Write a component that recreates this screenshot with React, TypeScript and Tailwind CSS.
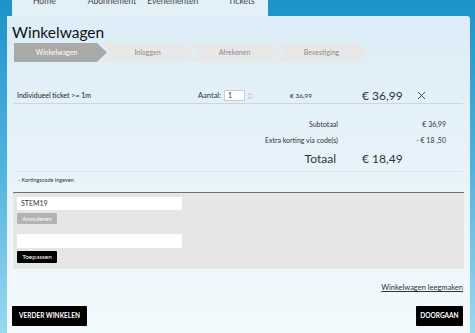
import React from 'react'
import { X, ChevronsUpDown } from 'lucide-react'

const chevron =
  '[clip-path:polygon(0_0,calc(100%-10px)_0,100%_50%,calc(100%-10px)_100%,0_100%,10px_50%)]'

export default function App() {
  return (
    <div className="w-[475px] h-[333px] overflow-hidden bg-gradient-to-b from-[#1a92c9] via-[#4fb3de] to-[#9ad8f0] font-['Lato',sans-serif] text-[#333]">
      {/* Top nav tab, cut off at the top */}
      <div className="ml-[12px] w-[256px] h-[16px] overflow-hidden bg-[#e2f0f7] flex text-[8.5px] text-[#444]">
        <span className="-mt-[5px] ml-[21px]">Home</span>
        <span className="-mt-[5px] ml-[32px]">Abonnement</span>
        <span className="-mt-[5px] ml-[11px]">Evenementen</span>
        <span className="-mt-[5px] ml-[30px]">Tickets</span>
      </div>

      {/* Main panel */}
      <div className="ml-[7px] w-[463px] h-[317px] rounded-tr-[3px] bg-gradient-to-b from-[#dcedf7] to-[#f3fafd] px-[5px] pt-[6px]">
        <h1 className="text-[15.5px] leading-[20px] text-[#111]">Winkelwagen</h1>

        {/* Steps */}
        <div className="mt-[1px] ml-[2px] flex h-[19px] text-[7px]">
          <div className="w-[93px] h-[19px] bg-[#a9a9a9] text-white flex items-center justify-center pr-[8px] [clip-path:polygon(0_0,calc(100%-10px)_0,100%_50%,calc(100%-10px)_100%,0_100%)]">
            Winkelwagen
          </div>
          {['Inloggen', 'Afrekenen', 'Bevestiging'].map((s) => (
            <div
              key={s}
              className={`-ml-[6px] w-[93px] h-[19px] bg-[#e8e8e8] text-[#888] flex items-center justify-center ${chevron}`}
            >
              {s}
            </div>
          ))}
        </div>

        {/* Item row */}
        <div className="mx-[2px] mt-[27px] flex items-center h-[15px] border-b border-[#cfd5d8] pb-[1px] text-[7px]">
          <div className="w-[184px] pl-[3px] text-[#222]">Individueel ticket &gt;= 1m</div>
          <div className="w-[92px] flex items-center">
            <span className="text-[7.5px]">Aantal:</span>
            <div className="ml-[3px] w-[21px] h-[11px] bg-white border border-[#ccc] text-[7px] pl-[3px] leading-[9px]">1</div>
            <ChevronsUpDown size={8} strokeWidth={1.5} className="ml-[1px] text-[#777]" />
          </div>
          <div className="w-[72px] text-[6.5px]">€ 36,99</div>
          <div className="w-[53px] text-[12px]">€ 36,99</div>
          <X size={13} strokeWidth={1.6} className="text-[#333]" />
        </div>

        {/* Totals */}
        <div className="mx-[2px] border-b border-[#dfe6e9] pb-[4px] text-[7px]">
          <div className="mt-[15px] flex h-[10px] items-center">
            <div className="w-[324px] text-right">Subtotaal</div>
            <div className="w-[108px] text-right">€ 36,99</div>
          </div>
          <div className="mt-[6px] flex h-[10px] items-center">
            <div className="w-[324px] text-right">Extra korting via code(s)</div>
            <div className="w-[108px] text-right">- € 18 ,50</div>
          </div>
          <div className="mt-[6px] flex h-[16px] items-center text-[12px]">
            <div className="w-[322px] text-right">Totaal</div>
            <div className="ml-[26px]">€ 18,49</div>
          </div>
        </div>

        <div className="mt-[4px] ml-[6px] h-[8px] flex items-center text-[5.5px]">- Kortingscode Ingeven</div>

        {/* Discount box */}
        <div className="mt-[8px] mx-[1px] h-[77px] bg-[#e6e6e6] border-t border-[#707070] pt-[4px] pl-[4px]">
          <div className="w-[165px] h-[13px] bg-white text-[7px] pl-[4px] flex items-center">STEM19</div>
          <button className="mt-[3px] w-[40px] h-[11px] bg-[#b3b3b3] text-white text-[6.5px] rounded-[1px] flex items-center justify-center">
            Annuleren
          </button>
          <div className="mt-[10px] w-[165px] h-[14px] bg-white"></div>
          <button className="mt-[3px] w-[40px] h-[12px] bg-black text-white text-[6.5px] rounded-[1px] flex items-center justify-center">
            Toepassen
          </button>
        </div>

        <div className="mt-[13px] h-[10px] flex justify-end pr-[2px] text-[7.5px]">
          <span className="underline">Winkelwagen leegmaken</span>
        </div>

        <div className="mt-[14px] flex justify-between">
          <button className="w-[75px] h-[20px] bg-black text-white text-[6.5px] font-bold rounded-[1px]">VERDER WINKELEN</button>
          <button className="mr-[2px] w-[47px] h-[20px] bg-black text-white text-[6.5px] font-bold rounded-[1px]">DOORGAAN</button>
        </div>
      </div>
    </div>
  )
}
